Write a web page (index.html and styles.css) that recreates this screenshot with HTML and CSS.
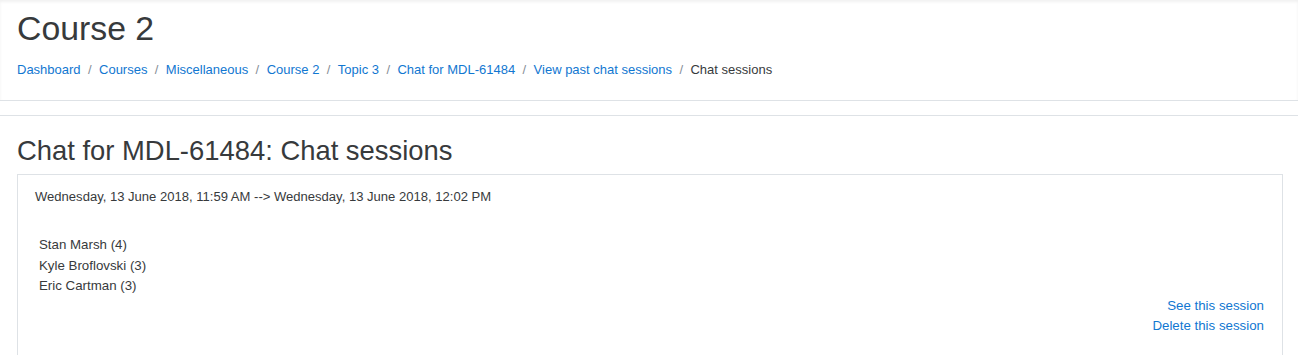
FILE: index.html
```html
<!DOCTYPE html>
<html lang="en">

<head>
	<meta charset="UTF-8">
	<title>Chat for MDL-61484: Chat sessions</title>
	<link rel="stylesheet" href="styles.css">
</head>

<body>
	<header class="page-header">
		<h1>Course 2</h1>
		<ol class="breadcrumb">
			<li><a href="#">Dashboard</a></li>
			<li><a href="#">Courses</a></li>
			<li><a href="#">Miscellaneous</a></li>
			<li><a href="#">Course 2</a></li>
			<li><a href="#">Topic 3</a></li>
			<li><a href="#">Chat for MDL-61484</a></li>
			<li><a href="#">View past chat sessions</a></li>
			<li>Chat sessions</li>
		</ol>
	</header>

	<section class="region-main">
		<h2>Chat for MDL-61484: Chat sessions</h2>
		<div class="generalbox">
			<p class="session-range">Wednesday, 13 June 2018, 11:59 AM --&gt; Wednesday, 13 June 2018, 12:02 PM</p>
			<ul class="session-users">
				<li>Stan Marsh (4)</li>
				<li>Kyle Broflovski (3)</li>
				<li>Eric Cartman (3)</li>
			</ul>
			<div class="session-links">
				<a href="#">See this session</a>
				<a href="#">Delete this session</a>
			</div>
		</div>
	</section>
</body>

</html>
```

FILE: styles.css
```css
*,
*::before,
*::after {
	box-sizing: border-box;
}

body {
	margin: 0;
	background-color: #fff;
	color: #373a3c;
	font-family: "Liberation Sans", Arial, sans-serif;
	font-size: 13.3px;
	line-height: 20.4px;
}

a {
	color: #1177d1;
	text-decoration: none;
}

.page-header {
	padding: 8px 17px 21px;
	border-bottom: 1px solid #dee2e6;
	box-shadow: inset 0 2px 3px rgba(0, 0, 0, 0.06);
}

.page-header h1 {
	margin: 0 0 11px;
	font-size: 33.8px;
	font-weight: 400;
	line-height: 1.2;
}

.breadcrumb {
	display: flex;
	flex-wrap: wrap;
	margin: 0;
	padding: 0;
	list-style: none;
	font-size: 13px;
	line-height: 19.5px;
}

.breadcrumb li + li::before {
	content: "/";
	padding: 0 7.4px;
	color: #868e96;
}

.region-main {
	margin-top: 14px;
	padding: 19px 15px 0 17px;
	border-top: 1px solid #dee2e6;
}

.region-main h2 {
	margin: 0 0 6px;
	font-size: 27.4px;
	font-weight: 400;
	line-height: 1.2;
}

.generalbox {
	padding: 12px 18px 20px 17px;
	border: 1px solid #dee2e6;
}

.session-range {
	margin: 0 0 28px;
	font-size: 13.05px;
}

.session-users {
	margin: 0;
	padding: 0 0 0 4px;
	list-style: none;
}

.session-links {
	display: flex;
	flex-direction: column;
	align-items: flex-end;
	margin-top: -1px;
}
```
